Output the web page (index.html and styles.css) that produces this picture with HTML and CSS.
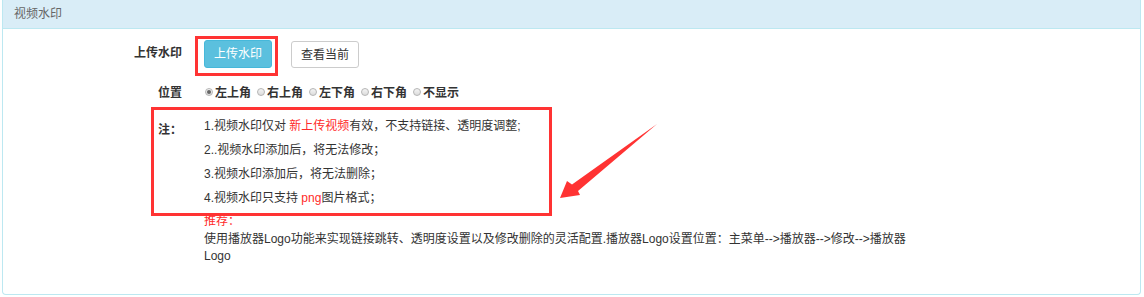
FILE: index.html
```html
<!DOCTYPE html>
<html lang="zh-CN">
<head>
<meta charset="utf-8">
<title>视频水印</title>
<link rel="stylesheet" href="styles.css">
</head>
<body>
<div class="panel">
  <div class="panel-heading">视频水印</div>
  <div class="panel-body">
    <div class="row row-upload">
      <div class="lbl lbl-upload">上传水印</div>
      <div class="mark-box">
        <button class="btn btn-info" type="button">上传水印</button>
      </div>
      <button class="btn btn-default" type="button">查看当前</button>
    </div>
    <div class="row row-pos">
      <div class="lbl">位置</div>
      <div class="radios">
        <label class="radio"><span class="dot checked"></span>左上角</label>
        <label class="radio"><span class="dot"></span>右上角</label>
        <label class="radio"><span class="dot"></span>左下角</label>
        <label class="radio"><span class="dot"></span>右下角</label>
        <label class="radio"><span class="dot"></span>不显示</label>
      </div>
    </div>
    <div class="note-box">
      <div class="lbl lbl-note">注：</div>
      <div class="note-lines">
        <div>1.视频水印仅对 <span class="red">新上传视频</span>有效，不支持链接、透明度调整;</div>
        <div>2..视频水印添加后，将无法修改；</div>
        <div>3.视频水印添加后，将无法删除；</div>
        <div>4.视频水印只支持 <span class="red">png</span>图片格式；</div>
      </div>
    </div>
    <div class="recommend">
      <div class="red">推荐：</div>
      <div>使用播放器Logo功能来实现链接跳转、透明度设置以及修改删除的灵活配置.播放器Logo设置位置：主菜单--&gt;播放器--&gt;修改--&gt;播放器Logo</div>
    </div>
  </div>
</div>
<svg class="arrow" width="1144" height="297" viewBox="0 0 1144 297">
  <polygon points="560,198 567,181 572,184.5 657,124 578,191 580,195" fill="#f33"/>
</svg>
</body>
</html>
```
FILE: styles.css
```css
html, body {
  margin: 0;
  padding: 0;
  background: #fff;
}
body {
  position: relative;
  width: 1144px;
  height: 297px;
  overflow: hidden;
  font-family: "Liberation Sans", "Noto Sans CJK SC", sans-serif;
  font-size: 12px;
  color: #333;
}
.panel {
  margin: 0 3px 0 2px;
  height: 295px;
  box-sizing: border-box;
  border: 1px solid #bce8f1;
  border-top: none;
  border-radius: 0 0 4px 4px;
}
.panel-heading {
  height: 28px;
  line-height: 28px;
  background: #d9edf7;
  border-bottom: 1px solid #bce8f1;
  padding-left: 11px;
  color: #666;
}
.panel-body {
  padding: 0;
}
.row {
  display: flex;
  align-items: flex-start;
}
.lbl {
  width: 179px;
  text-align: right;
  font-weight: bold;
  flex: none;
}
.row-upload {
  margin-top: 10px;
}
.lbl-upload {
  line-height: 28px;
}
.mark-box {
  margin-left: 16px;
  padding: 1px 3px 5px 6px;
  outline: 3px solid #f33;
}
.btn {
  display: block;
  height: 28px;
  width: 68px;
  padding: 0;
  box-sizing: border-box;
  border-radius: 3px;
  font-family: "Liberation Sans", "Noto Sans CJK SC", sans-serif;
  font-size: 12px;
  line-height: 26px;
  cursor: pointer;
}
.btn-info {
  background: #5bc0de;
  border: 1px solid #46b8da;
  color: #fff;
}
.btn-default {
  margin-left: 16px;
  margin-top: 2px;
  height: 27px;
  background: #fff;
  border: 1px solid #ccc;
  color: #333;
}
.row-pos {
  margin-top: 10px;
  line-height: 20px;
}
.radios {
  margin-left: 23px;
  display: flex;
  font-weight: bold;
}
.radio {
  display: flex;
  align-items: center;
  margin-right: 6px;
}
.dot {
  width: 6px;
  height: 6px;
  border-radius: 50%;
  border: 1px solid #b5b5b5;
  background: linear-gradient(#f4f4f4, #dcdcdc);
  margin-right: 2px;
  position: relative;
  top: -1px;
}
.dot.checked::after {
  content: "";
  position: absolute;
  left: 1px;
  top: 1px;
  width: 4px;
  height: 4px;
  border-radius: 50%;
  background: #666;
}
.note-box {
  display: flex;
  margin: 7px 0 0 151px;
  width: 395px;
  box-sizing: border-box;
  padding: 4px 0 3px 4px;
  outline: 3px solid #f33;
}
.lbl-note {
  width: 24px;
  text-align: left;
  padding-top: 4px;
  line-height: 24px;
}
.note-lines {
  margin-left: 22px;
  line-height: 24px;
}
.red {
  color: #ff2a2a;
}
.recommend {
  margin-left: 201px;
  width: 710px;
  line-height: 17.5px;
}
.arrow {
  position: absolute;
  left: 0;
  top: 0;
  pointer-events: none;
}
```
